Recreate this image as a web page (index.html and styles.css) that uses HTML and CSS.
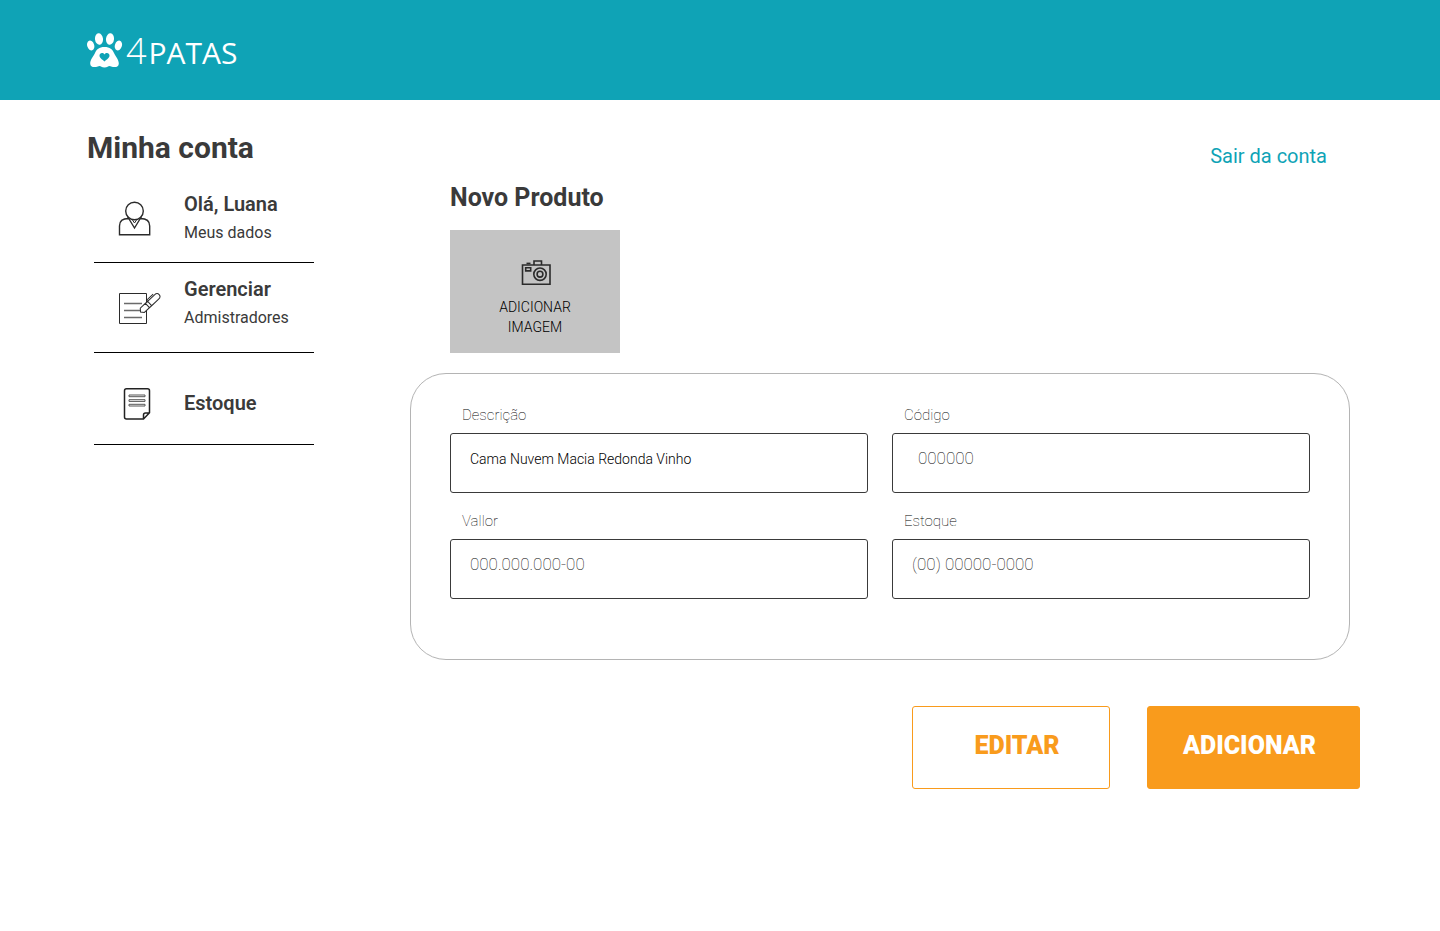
FILE: index.html
```html
<!DOCTYPE html>
<html lang="pt-BR">
<head>
<meta charset="utf-8">
<meta name="viewport" content="width=device-width, initial-scale=1">
<title>4 Patas - Novo Produto</title>
<link rel="stylesheet" href="styles.css">
</head>
<body>
<header class="topbar">
  <a class="logo" href="#">
    <svg class="logo-mark" viewBox="0 0 36 36" aria-hidden="true">
      <g fill="currentColor">
        <ellipse cx="12" cy="6" rx="4" ry="5.800" transform="rotate(-6 12 6)"/>
        <ellipse cx="23" cy="6" rx="4" ry="5.800" transform="rotate(6 23 6)"/>
        <ellipse cx="3.700" cy="12.500" rx="3.500" ry="5" transform="rotate(-18 3.700 12.500)"/>
        <ellipse cx="31.400" cy="12.500" rx="3.500" ry="5" transform="rotate(18 31.400 12.500)"/>
        <path fill-rule="evenodd" d="M17.500 14c5.500 0 8 2.500 9.500 6 1.500 3.500 4.800 6.500 4.800 10.500 0 3-2.500 4-5.800 3.500-1.500-.2-2.200-1-3.500-1-1.500 0-2 1.500-5 1.500s-3.500-1.500-5-1.500c-1.300 0-2 .8-3.500 1-3.300.5-5.800-.5-5.800-3.500 0-4 3.300-7 4.800-10.500 1.500-3.500 4-6 9.500-6zm0 7.500c-1.500-2.300-5-1.800-5 1.200 0 2.300 3 3.800 5 5.800 2-2 5-3.500 5-5.800 0-3-3.500-3.500-5-1.200z"/>
      </g>
    </svg>
    <span class="logo-number">4</span><span class="logo-name">PATAS</span>
  </a>
</header>

<main class="page">
  <aside class="sidebar">
    <h1 class="page-title">Minha conta</h1>
    <nav class="menu" aria-label="Minha conta">
      <a class="menu-item menu-item-user" href="#">
        <svg class="menu-icon" viewBox="0 0 48 50" fill="none" stroke="#2b2b2b" stroke-width="1.400" aria-hidden="true">
          <circle cx="16.500" cy="19" r="8.800"/>
          <path d="M10.500 26.500C5 26.500 1.500 28.500 1.500 34v8.700h30.200V34c0-5.500-3.500-7.500-9.200-7.500M9.500 24.500l7 11.500 7-11.500"/>
          <path d="M13 27.500h7M14.500 28l2 3 2-3" stroke-width="1"/>
        </svg>
        <span class="menu-text"><span class="menu-title">Olá, Luana</span><span class="menu-sub">Meus dados</span></span>
      </a>
      <a class="menu-item menu-item-manage" href="#">
        <svg class="menu-icon" viewBox="0 0 48 50" fill="none" stroke="#2b2b2b" aria-hidden="true">
          <path d="M28.500 16.500h-27v30h27z"/>
          <path d="M6 26.500h18M6 33.500h17M6 40.500h18" stroke="#6a6a6a" stroke-width="1.300"/>
          <g transform="translate(22.500 35) rotate(-43)" fill="#fff">
            <path d="M0 0l2.500-3h7v6h-7zM9.500-3h3v6h-3zM12.500-3H22q3.500 0 3.500 3T22 3h-9.500z"/>
            <path d="M12.500-3v-1.500h9" fill="none"/>
          </g>
        </svg>
        <span class="menu-text"><span class="menu-title">Gerenciar</span><span class="menu-sub">Admistradores</span></span>
      </a>
      <a class="menu-item menu-item-stock" href="#">
        <svg class="menu-icon" viewBox="0 0 48 50" fill="none" stroke="#222" stroke-width="1.500" stroke-linejoin="round" aria-hidden="true">
          <path d="M8.500 10.700h21q2 0 2 2v22l-6 6.300h-17q-2 0-2-2V12.700q0-2 2-2zM25.500 41v-4q0-2 2-2h4"/>
          <path d="M11 17h16v1.700H11zM11 21.700h16v1.700H11zM11 26.300h16V28H11z" stroke="#555" stroke-width="1"/>
        </svg>
        <span class="menu-title">Estoque</span>
      </a>
    </nav>
  </aside>

  <section class="content">
    <a class="logout" href="#">Sair da conta</a>
    <h2 class="section-title">Novo Produto</h2>
    <button class="upload" type="button">
      <svg class="upload-icon" viewBox="0 0 32 26" fill="none" stroke="#2b2b2b" stroke-width="1.600" aria-hidden="true">
        <path d="M3.500 5H31v19.200H3.500zM15 5V1h7.500v4"/>
        <path d="M7.500 3.400h4" stroke-width="1.600"/>
        <path d="M6.700 7.700h5v3.200h-5z"/>
        <circle cx="21" cy="14.200" r="6.200"/>
        <circle cx="21" cy="14.200" r="2.900"/>
      </svg>
      <span>ADICIONAR<br>IMAGEM</span>
    </button>

    <form class="product-form">
      <div class="card">
        <div class="field">
          <label for="descricao">Descrição</label>
          <input id="descricao" type="text" value="Cama Nuvem Macia Redonda Vinho">
        </div>
        <div class="field">
          <label for="codigo">Código</label>
          <input id="codigo" class="input-code" type="text" placeholder="000000">
        </div>
        <div class="field">
          <label for="valor">Vallor</label>
          <input id="valor" type="text" placeholder="000.000.000-00">
        </div>
        <div class="field">
          <label for="estoque">Estoque</label>
          <input id="estoque" type="text" placeholder="(00) 00000-0000">
        </div>
      </div>
      <div class="actions">
        <button class="btn btn-outline" type="button">EDITAR</button>
        <button class="btn btn-solid" type="submit">ADICIONAR</button>
      </div>
    </form>
  </section>
</main>
</body>
</html>
```
FILE: styles.css
```css
* {
  box-sizing: border-box;
}

body {
  margin: 0;
  background: #fff;
  color: #3a3a3a;
  font-family: Roboto, "Liberation Sans", sans-serif;
}

a {
  color: inherit;
  text-decoration: none;
}

.topbar {
  display: flex;
  align-items: center;
  min-height: 100px;
  padding: 2px 87px 0;
  background: #0fa3b6;
}

.logo {
  display: flex;
  align-items: center;
  color: #fff;
  font-family: "Open Sans", "Noto Sans", sans-serif;
  line-height: 40px;
}

.logo-mark {
  width: 36px;
  height: 36px;
}

.logo-number {
  margin-left: 3px;
  font-size: 36px;
  font-weight: 350;
}

.logo-name {
  margin-left: 2px;
  padding-top: 3px;
  font-size: 30px;
  font-weight: 400;
}

.page {
  display: grid;
  grid-template-columns: 227px minmax(0, 1fr);
  column-gap: 96px;
  padding: 0 80px 40px 87px;
}

.sidebar {
  padding-top: 30px;
}

.page-title {
  margin: 0 0 12px;
  font-size: 30px;
  font-weight: 700;
  line-height: 36px;
}

.menu {
  margin-left: 7px;
}

.menu-item {
  display: flex;
  align-items: flex-start;
  gap: 18px;
  padding: 14px 0 19px 24px;
  border-bottom: 1px solid #000;
}

.menu-item-manage {
  padding-bottom: 24px;
}

.menu-item-stock {
  align-items: center;
  padding: 25px 0 16px 24px;
}

.menu-icon {
  flex: none;
  width: 48px;
  height: 50px;
}

.menu-text {
  display: flex;
  flex-direction: column;
  gap: 7px;
}

.menu-title {
  font-size: 20px;
  font-weight: 600;
  line-height: 24px;
}

.menu-sub {
  font-size: 16px;
  line-height: 20px;
}

.content {
  display: flex;
  flex-direction: column;
  padding-top: 44px;
}

.logout {
  align-self: flex-end;
  margin-right: 33px;
  color: #0fa3b6;
  font-size: 20px;
  line-height: 24px;
}

.section-title {
  margin: 15px 0 17px 40px;
  font-size: 25px;
  font-weight: 700;
  line-height: 30px;
}

.upload {
  display: flex;
  flex-direction: column;
  align-items: center;
  gap: 11px;
  width: 170px;
  margin: 0 0 20px 40px;
  padding: 30px 0 16px;
  border: 0;
  background: #c4c4c4;
  color: #000;
  font: 300 14px/20px Roboto, sans-serif;
}

.upload-icon {
  width: 32px;
  height: 26px;
}

.card {
  display: grid;
  grid-template-columns: 1fr 1fr;
  gap: 18px 24px;
  margin-right: 10px;
  padding: 31px 39px 60px;
  border: 1px solid #b4b4b4;
  border-radius: 36px;
}

.field {
  display: flex;
  flex-direction: column;
  gap: 8px;
}

.field label {
  padding-left: 12px;
  color: #000;
  font-size: 15px;
  font-weight: 100;
  line-height: 20px;
}

.field input {
  width: 100%;
  height: 60px;
  padding: 0 19px 9px;
  border: 1px solid #3a3a3a;
  border-radius: 3px;
  background: #fff;
  color: #000;
  font: 300 14px Roboto, sans-serif;
}

.field input::placeholder {
  color: #000;
  font-size: 17px;
  font-weight: 100;
  opacity: 1;
}

.field .input-code {
  padding-left: 25px;
}

.actions {
  display: flex;
  justify-content: flex-end;
  gap: 37px;
  margin-top: 46px;
}

.btn {
  height: 83px;
  padding: 0 0 4px;
  border: 1px solid #f99b1c;
  border-radius: 3px;
  font: 900 25px Roboto, sans-serif;
}

.btn-outline {
  width: 198px;
  padding-left: 12px;
  background: #fff;
  color: #f99b1c;
}

.btn-solid {
  width: 213px;
  padding-right: 8px;
  background: #f99b1c;
  color: #fff;
}
```
